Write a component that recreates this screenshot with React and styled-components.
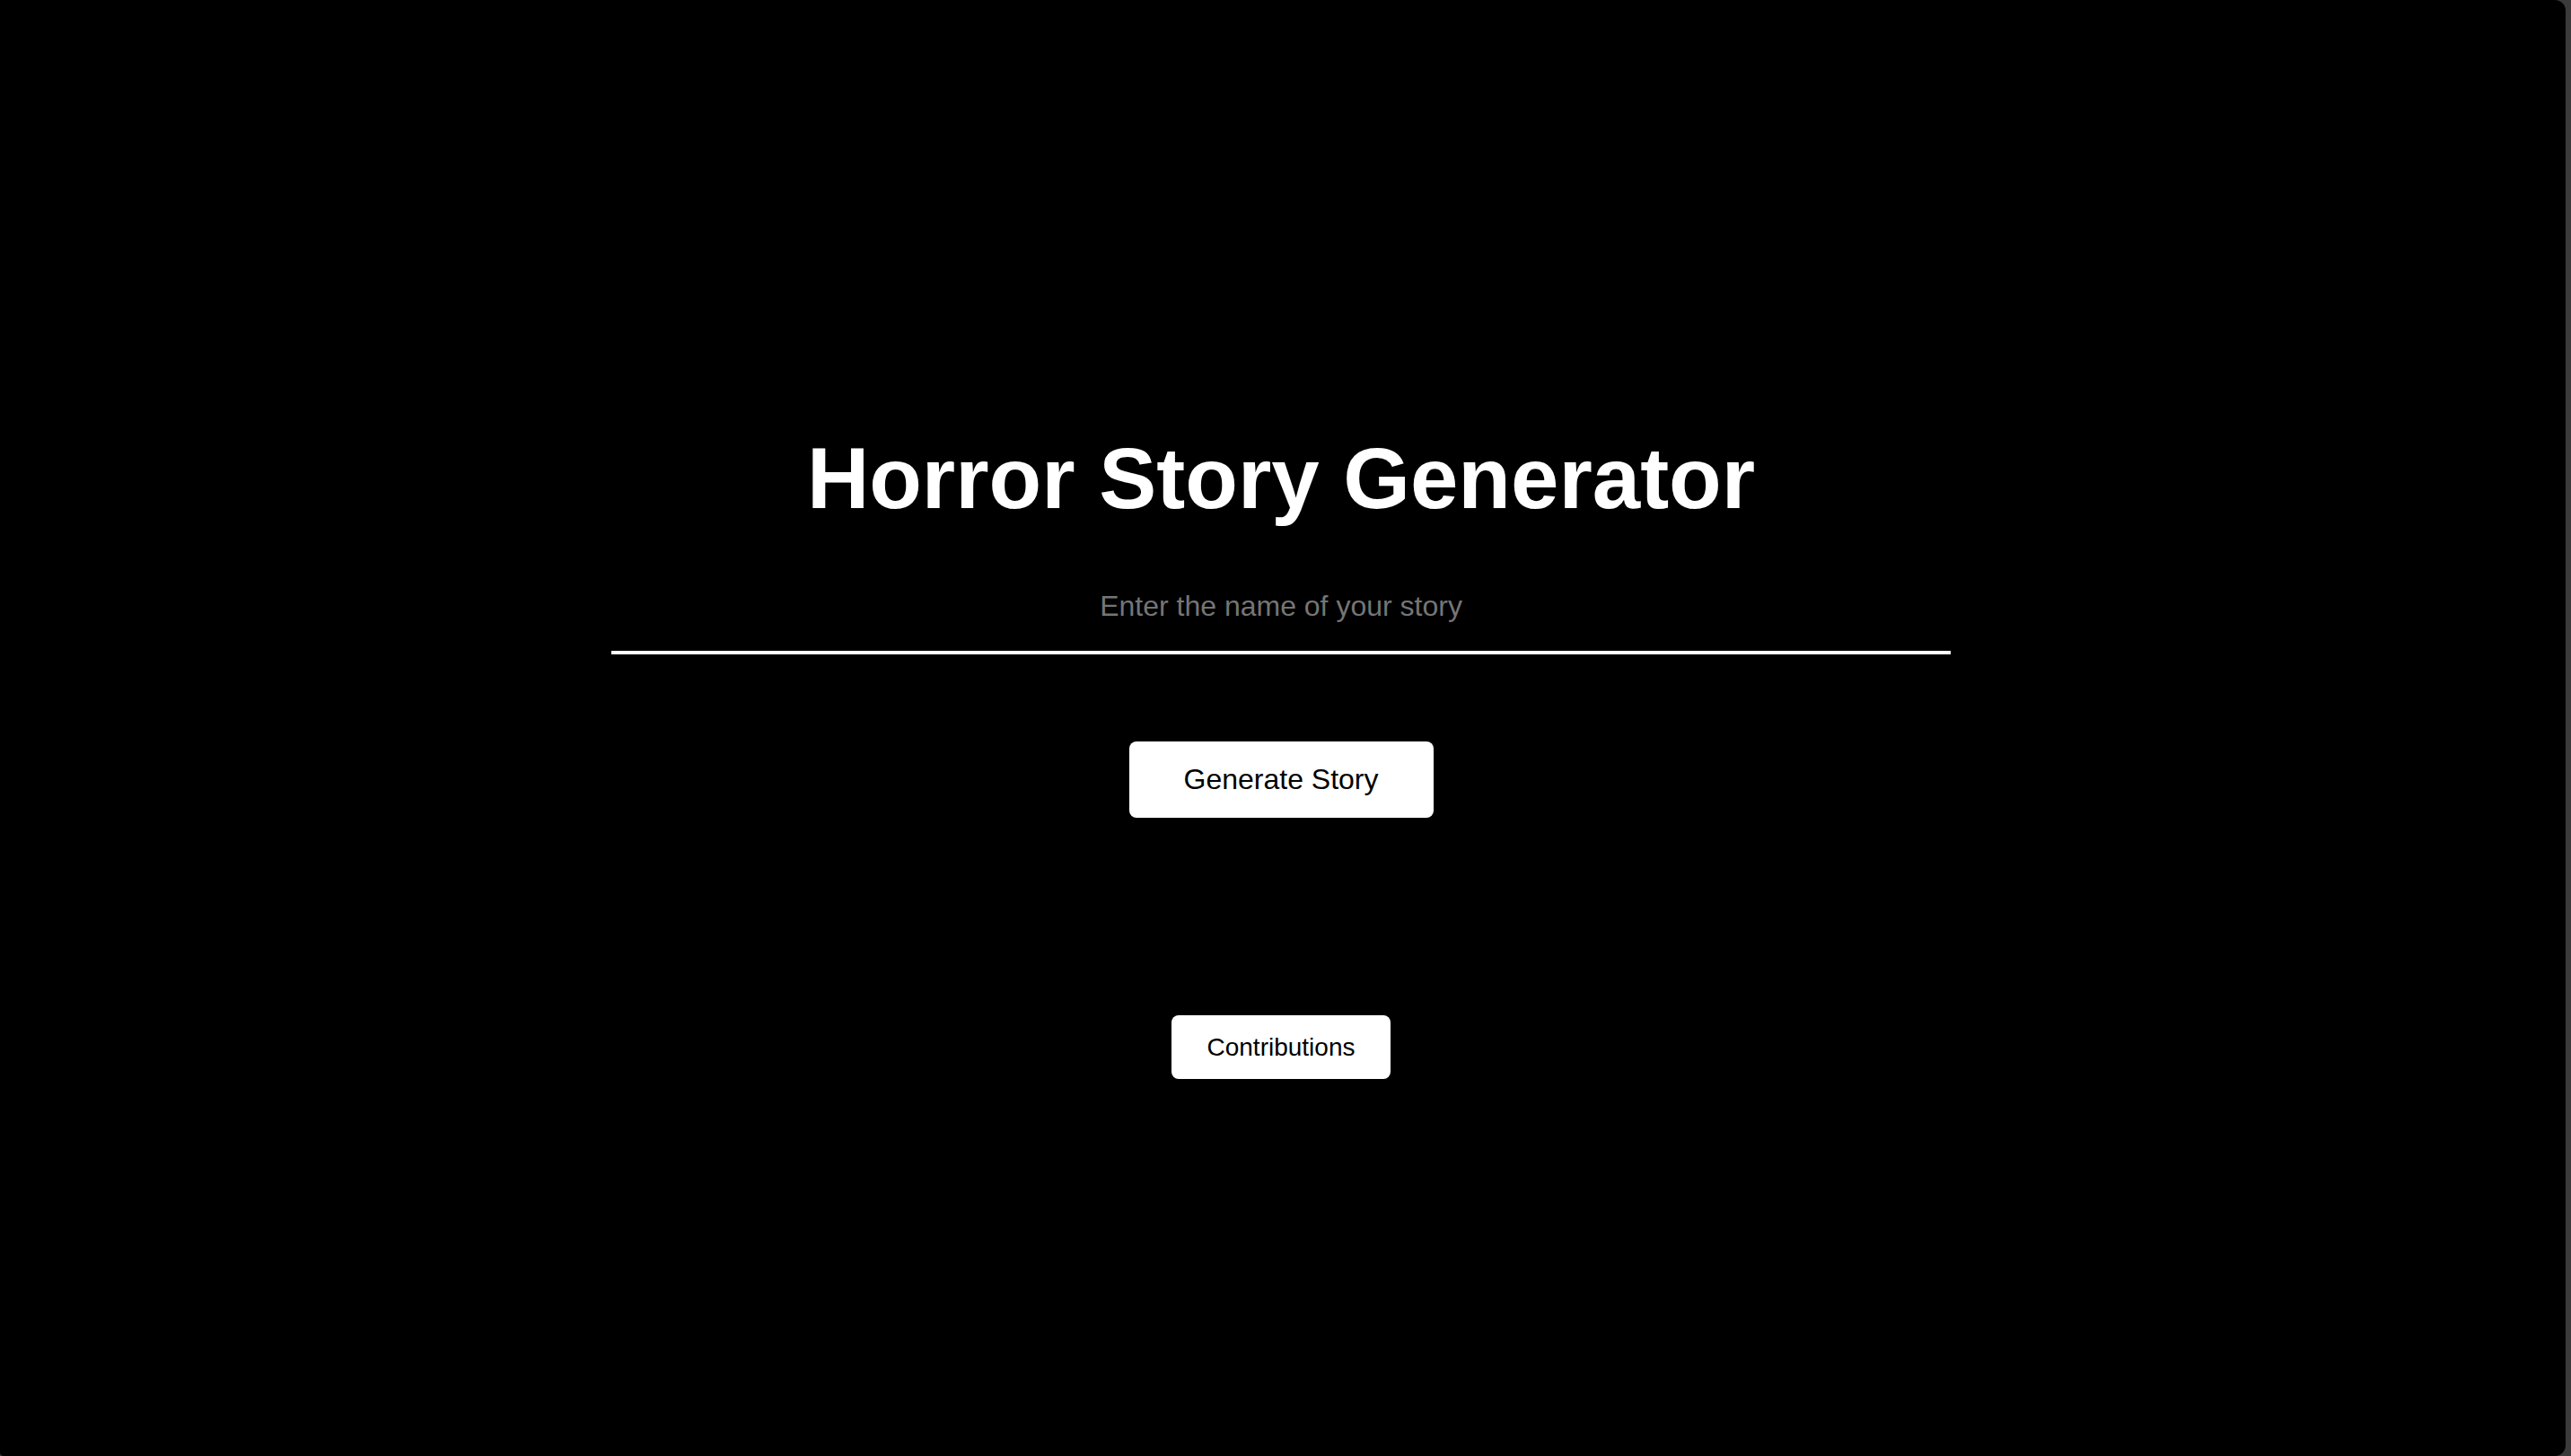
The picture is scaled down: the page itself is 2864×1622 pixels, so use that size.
import React from "react";
import styled, { createGlobalStyle } from "styled-components";

const Global = createGlobalStyle`
  html, body {
    margin: 0;
    padding: 0;
    background: #3b3b3b;
    overflow: hidden;
  }
  * { box-sizing: border-box; }
  body {
    font-family: "Liberation Sans", Arial, sans-serif;
  }
`;

const Panel = styled.main`
  width: calc(100vw - 6px);
  height: 100vh;
  background: #000;
  border-radius: 0 12px 12px 4px;
  display: flex;
  flex-direction: column;
  align-items: center;
  padding: 478px 4px 0 0;
`;

const Title = styled.h1`
  margin: 0;
  font-size: 96px;
  line-height: 110px;
  font-weight: 700;
  color: #fff;
  text-align: center;
`;

const StoryInput = styled.input`
  margin-top: 49px;
  width: 1492px;
  padding: 20px 0 31px;
  font-family: inherit;
  font-size: 32px;
  line-height: 37px;
  color: #fff;
  background: transparent;
  border: none;
  border-bottom: 4px solid #fff;
  text-align: center;
  outline: none;
  &::placeholder {
    color: #757575;
  }
`;

const Button = styled.button`
  margin-top: ${(p) => p.$gap}px;
  background: #fff;
  color: #000;
  border: none;
  border-radius: 8px;
  font-family: inherit;
  font-size: ${(p) => p.$size}px;
  line-height: ${(p) => p.$line}px;
  padding: ${(p) => p.$padY}px ${(p) => p.$padX}px;
  cursor: pointer;
`;

export default function App() {
  return (
    <>
      <Global />
      <Panel>
        <Title>Horror Story Generator</Title>
        <StoryInput type="text" placeholder="Enter the name of your story" />
        <Button $gap={97} $size={32} $line={37} $padY={24} $padX={61}>
          Generate Story
        </Button>
        <Button $gap={220} $size={28} $line={32} $padY={19.5} $padX={40}>
          Contributions
        </Button>
      </Panel>
    </>
  );
}
